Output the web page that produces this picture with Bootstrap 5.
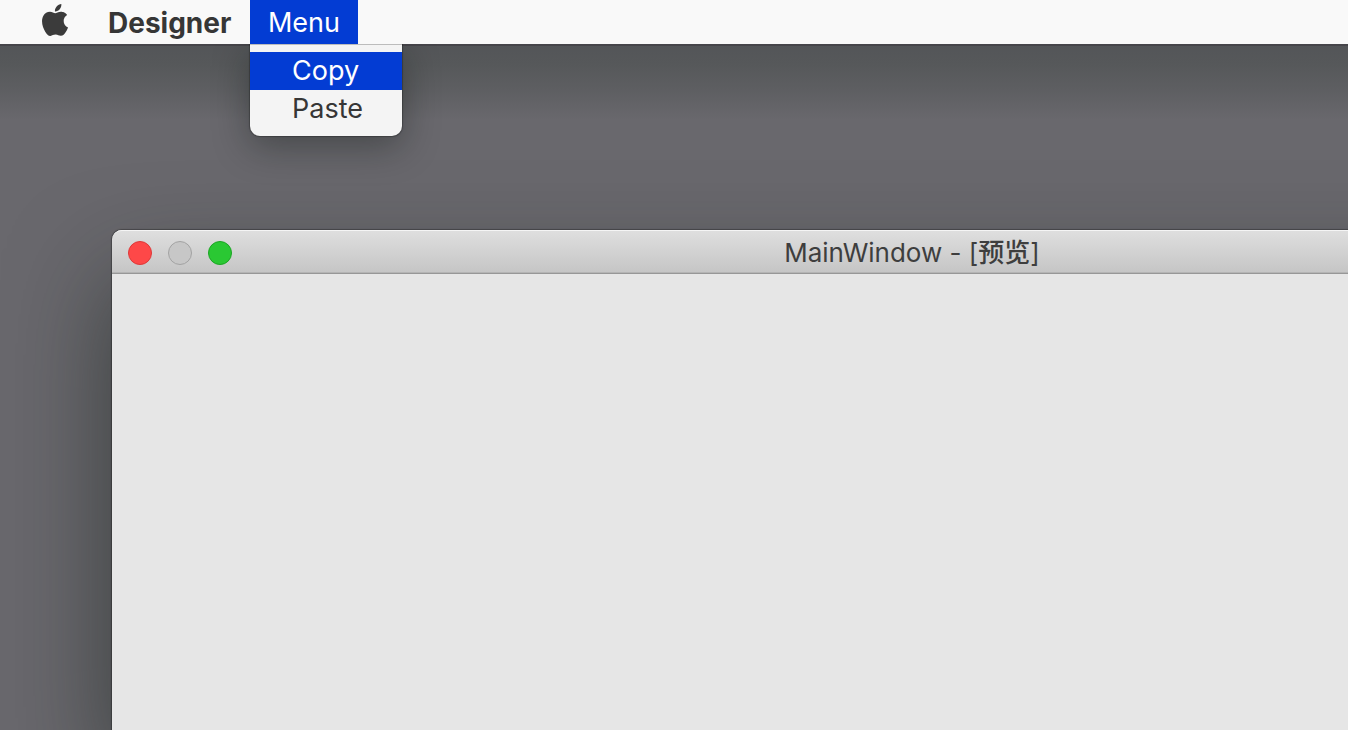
<!DOCTYPE html>
<html lang="en">
<head>
<meta charset="utf-8">
<meta name="viewport" content="width=device-width, initial-scale=1">
<title>Designer</title>
<link href="https://cdn.jsdelivr.net/npm/bootstrap@5.3.0/dist/css/bootstrap.min.css" rel="stylesheet">
<script src="https://cdn.jsdelivr.net/npm/bootstrap@5.3.0/dist/js/bootstrap.bundle.min.js" defer></script>
<style>
  body {
    font-family: Inter, "Noto Sans CJK SC", sans-serif;
    color: #363636;
    background: #69686d;
  }
  .menubar {
    height: 44px;
    background: #f9f9f9;
    font-size: 27px;
    line-height: 46px;
    box-shadow: 0 2px 0 #46454a;
    z-index: 2;
  }
  .apple { margin-left: 42px; color: #3b3b3b; }
  .apple svg { width: 26px; height: 32px; margin-top: 4px; }
  .app-name { margin-left: 40px; width: 142px; font-size: 28px; }
  .menu-title { width: 108px; height: 44px; background: #033cd3; line-height: 46px; }
  .dropdown-menu.app-menu {
    top: 44px;
    left: 0;
    width: 152px;
    min-width: 0;
    padding: 7px 0 8px;
    font-size: 27px;
    background: #f4f4f4;
    border: 0;
    border-top: 1px solid #bcbcbc;
    border-radius: 0 0 10px 10px;
    box-shadow: 0 0 1px 1px rgba(0, 0, 0, .25), 0 10px 36px rgba(10, 18, 16, .38);
    clip-path: inset(0 -60px -80px -60px);
  }
  .app-menu .dropdown-item {
    height: 38px;
    padding: 0 0 0 42px;
    line-height: 37px;
    color: #363636;
  }
  .app-menu .dropdown-item.active { background: #033cd3; color: #fff; }
  .desktop {
    padding: 186px 0 0 112px;
    background: linear-gradient(#535558 0, #56585a 20px, #5d5e61 44px, #69686d 76px);
  }
  /* The window runs on past the right edge of the screen */
  .app-window {
    margin-right: -364px;
    background: #e6e6e6;
    border-radius: 10px 10px 0 0;
    box-shadow: 0 0 1px 1px rgba(0, 0, 0, .3), 0 50px 100px rgba(22, 31, 26, .58);
  }
  .titlebar {
    display: grid;
    grid-template-columns: 1fr auto 1fr;
    height: 44px;
    padding: 0 16px;
    background: linear-gradient(#dfdfdf, #c5c5c5);
    border-bottom: 1px solid #979797;
    border-radius: 10px 10px 0 0;
    box-shadow: inset 0 2px 0 -1px #f5f5f5, inset 0 -1px 0 #b4b4b4;
  }
  .window-title { font-size: 26px; line-height: 46px; color: #3e3e3e; }
  .light {
    width: 24px;
    height: 24px;
    padding: 0;
    border: 1px solid;
    border-radius: 50%;
  }
  .light-close { background: #fe4848; border-color: #de3838; }
  .light-minimize { background: #c7c7c7; border-color: #a3a3a3; }
  .light-zoom { background: #2ac833; border-color: #1ca524; }
</style>
</head>
<body class="vh-100 d-flex flex-column overflow-hidden">
  <header class="menubar position-relative d-flex flex-shrink-0">
    <a class="apple d-flex" href="#" aria-label="Apple menu">
      <svg viewBox="2.2 0 19.6 24" fill="currentColor" aria-hidden="true"><path d="M12.152 6.896c-.948 0-2.415-1.078-3.96-1.04-2.04.027-3.91 1.183-4.961 3.014-2.117 3.675-.546 9.103 1.519 12.09 1.013 1.454 2.208 3.09 3.792 3.039 1.52-.065 2.09-.987 3.935-.987 1.831 0 2.35.987 3.96.948 1.637-.026 2.676-1.48 3.676-2.948 1.156-1.688 1.636-3.325 1.662-3.415-.039-.013-3.182-1.221-3.22-4.857-.026-3.04 2.48-4.494 2.597-4.559-1.429-2.09-3.623-2.324-4.39-2.376-2-.156-3.675 1.09-4.61 1.09zM15.53 3.83c.843-1.012 1.4-2.427 1.245-3.83-1.207.052-2.662.805-3.532 1.818-.78.896-1.454 2.338-1.273 3.714 1.338.104 2.715-.688 3.559-1.701"/></svg>
    </a>
    <a class="app-name fw-bold text-reset text-decoration-none" href="#">Designer</a>
    <div class="dropdown">
      <button class="menu-title d-block border-0 p-0 text-white text-center" type="button" data-bs-toggle="dropdown" data-bs-display="static" aria-expanded="true">Menu</button>
      <ul class="dropdown-menu app-menu show m-0">
        <li><a class="dropdown-item active" href="#">Copy</a></li>
        <li><a class="dropdown-item" href="#">Paste</a></li>
      </ul>
    </div>
  </header>
  <main class="desktop d-flex flex-column flex-grow-1 overflow-hidden">
    <section class="app-window flex-grow-1">
      <div class="titlebar">
        <div class="d-flex align-items-center gap-3">
          <button class="light light-close" type="button" aria-label="Close"></button>
          <button class="light light-minimize" type="button" aria-label="Minimize"></button>
          <button class="light light-zoom" type="button" aria-label="Zoom"></button>
        </div>
        <h1 class="window-title fw-normal m-0">MainWindow - [<span class="fw-medium" lang="zh-CN">预览</span>]</h1>
      </div>
    </section>
  </main>
</body>
</html>
